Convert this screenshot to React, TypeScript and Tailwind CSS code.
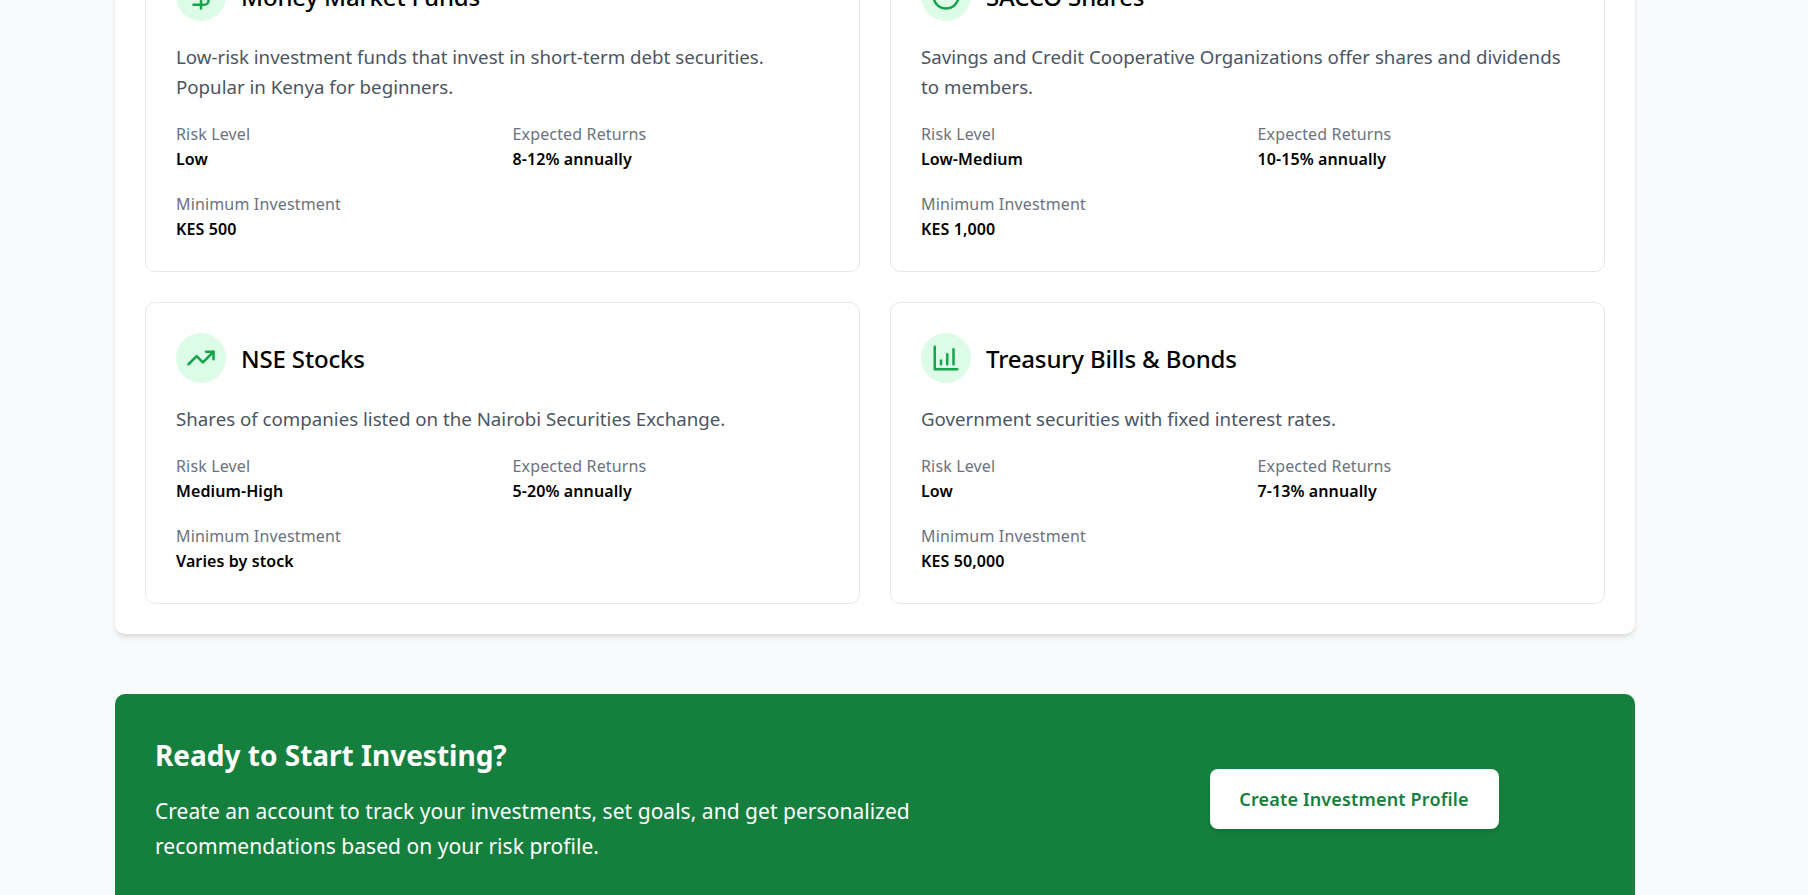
import React from 'react';
import { DollarSign, CircleDot, TrendingUp } from 'lucide-react';

type Option = {
    title: string;
    description: string;
    risk: string;
    returns: string;
    minimum: string;
    icon: React.ReactNode;
};

// square-cornered axis, the lucide one has a rounded corner
const BarsIcon = () => (
    <svg viewBox="0 0 24 24" fill="none" stroke="currentColor" strokeWidth="2" strokeLinecap="round" strokeLinejoin="round" className="w-[30px] h-[30px]">
        <path d="M3 3v18h18" />
        <path d="M13 17V9" />
        <path d="M18 17V5" />
        <path d="M8 17v-3" />
    </svg>
);

const options: Option[] = [
    {
        title: 'Money Market Funds',
        description: 'Low-risk investment funds that invest in short-term debt securities. Popular in Kenya for beginners.',
        risk: 'Low',
        returns: '8-12% annually',
        minimum: 'KES 500',
        icon: <DollarSign className="w-[30px] h-[30px]" />,
    },
    {
        title: 'SACCO Shares',
        description: 'Savings and Credit Cooperative Organizations offer shares and dividends to members.',
        risk: 'Low-Medium',
        returns: '10-15% annually',
        minimum: 'KES 1,000',
        icon: <CircleDot className="w-[30px] h-[30px]" />,
    },
    {
        title: 'NSE Stocks',
        description: 'Shares of companies listed on the Nairobi Securities Exchange.',
        risk: 'Medium-High',
        returns: '5-20% annually',
        minimum: 'Varies by stock',
        icon: <TrendingUp className="w-[30px] h-[30px]" />,
    },
    {
        title: 'Treasury Bills & Bonds',
        description: 'Government securities with fixed interest rates.',
        risk: 'Low',
        returns: '7-13% annually',
        minimum: 'KES 50,000',
        icon: <BarsIcon />,
    },
];

const Stat: React.FC<{ label: string; value: string }> = ({ label, value }) => (
    <div>
        <div className="text-base leading-[25px] text-[#6b7280] tracking-[0.15px]">{label}</div>
        <div className="text-base leading-[25px] font-semibold text-black tracking-[0.1px]">{value}</div>
    </div>
);

const OptionCard: React.FC<{ option: Option }> = ({ option }) => (
    <div className="bg-white border border-gray-200 rounded-[10px] px-[30px] pt-[30px] pb-[29px]">
        <div className="flex items-center gap-[15px] mb-[21px]">
            <div className="w-[50px] h-[50px] rounded-full bg-[#dcfce7] text-[#16a34a] flex items-center justify-center">
                {option.icon}
            </div>
            <h3 className="text-2xl font-medium text-black pt-[2px] tracking-[-0.15px]">{option.title}</h3>
        </div>
        <p className="text-[18.7px] leading-[30px] text-[#4b5563] mb-5">{option.description}</p>
        <div className="grid grid-cols-2 gap-x-5 gap-y-5">
            <Stat label="Risk Level" value={option.risk} />
            <Stat label="Expected Returns" value={option.returns} />
            <Stat label="Minimum Investment" value={option.minimum} />
        </div>
    </div>
);

export default function App() {
    return (
        <div className="h-screen overflow-hidden bg-[#f9fafb] font-['Noto_Sans',sans-serif]">
            <div className="w-[1520px] ml-[115px] -mt-[90px]">
                {/* Investment options */}
                <div className="bg-white rounded-[10px] shadow-md p-[30px] mb-[60px]">
                    <div className="grid grid-cols-2 gap-[30px]">
                        {options.map(option => (
                            <OptionCard key={option.title} option={option} />
                        ))}
                    </div>
                </div>

                {/* Call to action */}
                <div className="bg-[#15803d] rounded-[10px] p-10 text-white grid grid-cols-[1fr_482px] items-center">
                    <div>
                        <h2 className="text-[28px] font-bold mb-[18px]">Ready to Start Investing?</h2>
                        <p className="text-[21px] leading-[35px] max-w-[800px] tracking-[0.03px]">
                            Create an account to track your investments, set goals, and get personalized recommendations based on your risk profile.
                        </p>
                    </div>
                    <div className="flex justify-center">
                        <button className="bg-white text-[#15803d] text-lg font-semibold w-[289px] h-[60px] rounded-lg shadow-md tracking-[0.15px]">
                            Create Investment Profile
                        </button>
                    </div>
                </div>
            </div>
        </div>
    );
}
